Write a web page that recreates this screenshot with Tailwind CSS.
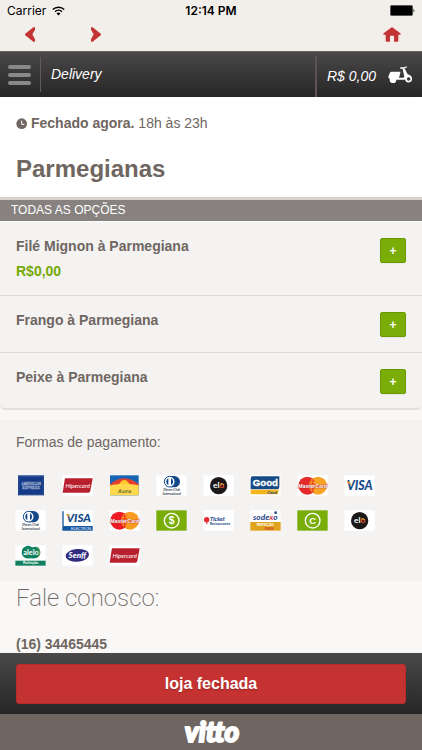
<!DOCTYPE html>
<html lang="pt-BR">
<head>
<meta charset="utf-8">
<meta name="viewport" content="width=device-width, initial-scale=1">
<title>Delivery</title>
<script src="https://cdn.jsdelivr.net/npm/@tailwindcss/browser@4"></script>
</head>
<body class="flex h-screen flex-col overflow-hidden bg-[#f9f8f6] font-['Liberation_Sans',Arial,sans-serif] text-[14px] text-[#6f6661]">

<div class="shrink-0 bg-[#f2eeea]">
  <div class="grid h-[21px] grid-cols-3 items-center px-[7px] font-[Inter,sans-serif] text-[12px] text-black">
    <div class="flex items-center gap-[6px]"><span>Carrier</span>
      <svg class="h-[10px] w-[13px]" viewBox="0 0 26 20" fill="none" stroke="#000" stroke-width="3" aria-label="Wi-Fi"><path d="M1.500 7a16.500 16.500 0 0 1 23 0"/><path d="M6 11.500a10 10 0 0 1 14 0"/><path d="M13 19l-4-4a5.700 5.700 0 0 1 8 0z" fill="#000" stroke="none"/></svg>
    </div>
    <time class="text-center font-semibold">12:14 PM</time>
    <svg class="h-[11px] w-[25px] justify-self-end" viewBox="0 0 25 11" aria-label="Bateria"><rect x=".5" y=".5" width="22" height="10" rx="1" fill="#000" stroke="#555"/><path d="M23.500 3.500q1.500 2 0 4z"/></svg>
  </div>
  <nav class="flex h-[30px] items-start pr-[21px] pl-[20px] pt-[6px]">
    <button aria-label="Voltar" class="flex w-5 justify-center"><svg class="h-[15px] w-[10px]" viewBox="0 0 30 45" fill="#c33333"><path d="M30 1v7L22 22l8 15v7h-5L0 24v-3L25 1z"/></svg></button>
    <button aria-label="Avançar" class="ml-[46px] flex w-5 justify-center"><svg class="h-[15px] w-[10px]" viewBox="0 0 30 45" fill="#c33333"><path d="M0 1v7l8 14-8 15v7h5l25-20v-3L5 1z"/></svg></button>
    <a href="#" aria-label="Início" class="ml-auto"><svg class="h-[15px] w-[18px]" viewBox="0 0 54 45" fill="#c33333"><path d="M23 3q4-4 8 0l21 16q3 4-2 4h-4v18q0 3-3 3H33V28q0-2-2-2h-8q-2 0-2 2v16H11q-3 0-3-3V23H4q-5 0-2-4z"/></svg></a>
  </nav>
</div>

<header class="flex h-[46px] shrink-0 items-stretch border-t border-[#6f6661] bg-linear-to-b from-[#4a4848] to-[#272626] text-white italic">
  <button aria-label="Menu" class="my-[5px] flex w-[41px] flex-col justify-center gap-1 border-r border-[#635a55] pr-[9px] pl-2">
    <span class="h-1 w-full rounded-xs bg-[#8b8987]"></span><span class="h-1 w-full rounded-xs bg-[#8b8987]"></span><span class="h-1 w-full rounded-xs bg-[#8b8987]"></span>
  </button>
  <h1 class="pt-3 pl-[10px] leading-5">Delivery</h1>
  <a href="#" class="mt-1 ml-auto flex items-center gap-3 border-l-2 border-[#5b5451] pr-[10px] pl-[10px]">
    <span>R$ 0,00</span>
    <svg class="mb-1 h-[17px] w-[24px]" viewBox="0 0 72 51" aria-label="Pedido"><path d="M10 17h25q3 0 2 4l-4 14h13l3-3-5-22h7l8 15q9 1 12 9l-7-1q-10-2-12 8H25a10 10 0 0 1-20 0l-1-4q-4-1-3-5l4-10q1-5 5-5z" fill="#fff"/><path d="M38 6h10l7-3M46 6l5 13" fill="none" stroke="#fff" stroke-width="4" stroke-linecap="round"/><circle cx="62" cy="39" r="8" fill="#383737" stroke="#fff" stroke-width="5"/></svg>
  </a>
</header>

<main class="min-h-0 flex-1 overflow-hidden">
  <section class="bg-white px-4 pt-[17px] pb-[14px]">
    <p class="flex items-center gap-[3px] leading-[18px]">
      <svg class="h-[11px] w-[12px]" viewBox="0 0 36 33" aria-hidden="true"><circle cx="17" cy="17" r="16" fill="#6f6661"/><path d="M17 8v11h8" fill="none" stroke="#fff" stroke-width="3"/></svg>
      <span><strong>Fechado agora.</strong> 18h às 23h</span>
    </p>
    <h2 class="mt-[22px] text-[24px] leading-[29px] font-bold">Parmegianas</h2>
  </section>

  <section class="rounded-b-[5px] border-b-2 border-[#e6e1de] bg-[#f4f3f2]">
    <h3 class="border-t-3 border-b border-t-[#d8d2ce] border-b-white bg-[#878280] pl-[11px] text-[12px] leading-[21px] text-white">TODAS AS OPÇÕES</h3>
    <ul>
      <li class="flex items-start justify-between border-b border-[#e0dad7] px-4 pt-4 pb-[15px]">
        <div class="font-bold"><h4 class="leading-4">Filé Mignon à Parmegiana</h4><p class="mt-2 leading-[18px] text-[#76a908]">R$0,00</p></div>
        <button aria-label="Adicionar Filé Mignon à Parmegiana" class="h-[25px] w-[26px] rounded-xs border border-[#699900] bg-[#7aad07] text-[12px] leading-none font-bold text-white shadow-xs">+</button>
      </li>
      <li class="flex items-start justify-between border-b border-[#e0dad7] px-4 pt-4 pb-[15px]">
        <h4 class="leading-4 font-bold">Frango à Parmegiana</h4>
        <button aria-label="Adicionar Frango à Parmegiana" class="h-[25px] w-[26px] rounded-xs border border-[#699900] bg-[#7aad07] text-[12px] leading-none font-bold text-white shadow-xs">+</button>
      </li>
      <li class="flex items-start justify-between px-4 pt-4 pb-[14px]">
        <h4 class="leading-4 font-bold">Peixe à Parmegiana</h4>
        <button aria-label="Adicionar Peixe à Parmegiana" class="h-[25px] w-[26px] rounded-xs border border-[#699900] bg-[#7aad07] text-[12px] leading-none font-bold text-white shadow-xs">+</button>
      </li>
    </ul>
  </section>

  <section class="mt-[10px] bg-[#f4f3f2] pt-[13px] pb-[15px]">
    <h3 class="px-4 leading-[18px]">Formas de pagamento:</h3>
    <ul class="mt-6 flex flex-wrap gap-x-4 gap-y-[14px] px-[15px]">
      <!-- American Express -->
      <li><svg class="h-[21px] w-[31px]" viewBox="0 0 93 63"><rect x="9" y="1" width="78" height="60" fill="#143a87"/><rect x="12" y="5" width="72" height="53" fill="none" stroke="#5e79ad"/><g font-family="Liberation Sans" font-weight="700" font-size="11" text-anchor="middle" fill="#143a87" stroke="#a9b9d6" stroke-width="1"><text x="48" y="29">AMERICAN</text><text x="48" y="42">EXPRESS</text></g></svg></li>
      <!-- Hipercard -->
      <li><svg class="h-[21px] w-[31px]" viewBox="0 0 93 63"><rect x="1" y="1" width="91" height="61" fill="#fff"/><path d="M9 10h83l-7 38q-1 5-6 5H2l6-39q0-4 4-4z" fill="#b9202e"/><text x="47" y="38" font-family="Lato" font-style="italic" font-weight="400" font-size="18" text-anchor="middle" fill="#fff">Hipercard</text></svg></li>
      <!-- Aura -->
      <li><svg class="h-[21px] w-[31px]" viewBox="0 0 93 63"><path fill="#1765b2" d="M3 1h86v60H3z"/><path d="M3 28Q46-8 89 28v8H3z" fill="#e6402d"/><path d="M28 31q18-32 36 0z" fill="#ffc629"/><path d="M3 31Q46 22 89 31v30H3z" fill="#ffd84c"/><text x="47" y="53" font-family="DejaVu Sans" font-style="italic" font-weight="700" font-size="15" text-anchor="middle" fill="#75733c">Aura</text></svg></li>
      <!-- Diners Club -->
      <li><svg class="h-[21px] w-[31px]" viewBox="0 0 93 63"><path fill="#fff" d="M1 1h91v61H1z"/><path d="M43 3h12a16 16 0 0 1 0 34H43z" fill="#134889"/><circle cx="41" cy="20" r="16" fill="#fff" stroke="#134889" stroke-width="3"/><path d="M37 10a11 11 0 0 0 0 20zm8 0a11 11 0 0 1 0 20z" fill="#134889"/><g font-family="Liberation Serif" font-style="italic" font-weight="700" font-size="10" text-anchor="middle" fill="#39434f"><text x="47" y="48">Diners Club</text><text x="47" y="60">International</text></g></svg></li>
      <!-- Elo -->
      <li><svg class="h-[21px] w-[31px]" viewBox="0 0 93 63"><path fill="#fff" d="M1 1h91v61H1z"/><circle cx="47" cy="32" r="26" fill="#1b1817"/><text x="47" y="38" text-anchor="middle" font-family="Lato" font-weight="700" font-size="25" fill="#fff">el<tspan fill="#ef5a31">o</tspan></text><path d="M52 27q7-4 10 3" stroke="#ffd23c" stroke-width="3" fill="none"/></svg></li>
      <!-- Good Card -->
      <li><svg class="h-[21px] w-[31px]" viewBox="0 0 93 63"><path fill="#fff" d="M1 1h91v61H1z"/><path d="M8 4h80v32q0 7-7 7H2V11q0-7 6-7z" fill="#164a87"/><path d="M2 44h85l-4 14H2z" fill="#f5b51d"/><text x="46" y="34" font-family="Liberation Sans" font-weight="700" font-size="29" text-anchor="middle" fill="#fff" stroke="#fff">Good</text><text x="81" y="56" font-family="Liberation Sans" font-weight="700" font-style="italic" font-size="13" text-anchor="end" fill="#184577">Card</text></svg></li>
      <!-- MasterCard -->
      <li><svg class="h-[21px] w-[31px]" viewBox="0 0 93 63"><path fill="#fff" d="M1 1h91v61H1z"/><circle cx="31" cy="32" r="27" fill="#e52a2c"/><circle cx="63" cy="32" r="27" fill="#f6a326"/><path d="M47 10v44M40 18h14m-14 8h14M40 42h14m-11 7h8" stroke="#e52a2c" stroke-width="2"/><text x="47" y="38" font-family="Liberation Sans" font-style="italic" font-weight="700" font-size="16" text-anchor="middle" fill="#fff" stroke="#bd2525" stroke-width="2" paint-order="stroke">MasterCard</text></svg></li>
      <!-- Visa -->
      <li><svg class="h-[21px] w-[31px]" viewBox="0 0 93 63"><path fill="#fff" d="M1 1h91v61H1z"/><text x="47" y="46" font-family="Lato" font-style="italic" font-weight="900" font-size="37" text-anchor="middle" fill="#174989">VISA</text><path d="M5 20h13l4 13q-6-10-17-13z" fill="#f2a52b"/></svg></li>
      <!-- Diners Club -->
      <li><svg class="h-[21px] w-[31px]" viewBox="0 0 93 63"><path fill="#fff" d="M1 1h91v61H1z"/><path d="M43 3h12a16 16 0 0 1 0 34H43z" fill="#134889"/><circle cx="41" cy="20" r="16" fill="#fff" stroke="#134889" stroke-width="3"/><path d="M37 10a11 11 0 0 0 0 20zm8 0a11 11 0 0 1 0 20z" fill="#134889"/><g font-family="Liberation Serif" font-style="italic" font-weight="700" font-size="10" text-anchor="middle" fill="#39434f"><text x="47" y="48">Diners Club</text><text x="47" y="60">International</text></g></svg></li>
      <!-- Visa Electron -->
      <li><svg class="h-[21px] w-[31px]" viewBox="0 0 93 63"><path fill="#fff" d="M1 1h91v61H1z"/><path d="M1 4h4v44h87v14H1z" fill="#1556a0"/><text x="50" y="37" font-family="Lato" font-style="italic" font-weight="900" font-size="35" text-anchor="middle" fill="#164a8a">VISA</text><path d="M10 13h11l3 12q-5-9-14-12z" fill="#f2a52b"/><text x="87" y="59" font-family="Liberation Sans" font-size="11" text-anchor="end" fill="#fff">ELECTRON</text></svg></li>
      <!-- MasterCard -->
      <li><svg class="h-[21px] w-[31px]" viewBox="0 0 93 63"><path fill="#fff" d="M1 1h91v61H1z"/><circle cx="31" cy="32" r="27" fill="#ed1c24"/><circle cx="63" cy="32" r="27" fill="#f79c20"/><path d="M47 10v44M40 18h14m-14 8h14M40 42h14m-11 7h8" stroke="#ed1c24" stroke-width="2"/><text x="47" y="38" font-family="Liberation Sans" font-style="italic" font-weight="700" font-size="16" text-anchor="middle" fill="#fff" stroke="#bd2525" stroke-width="2" paint-order="stroke">MasterCard</text></svg></li>
      <!-- Dinheiro -->
      <li><svg class="h-[21px] w-[31px]" viewBox="0 0 93 63"><path fill="#79ad08" d="M1 1h91v61H1z"/><circle cx="47" cy="32" r="22" fill="none" stroke="#fff" stroke-width="4"/><text x="47" y="43" font-family="Liberation Sans" font-weight="700" font-size="31" text-anchor="middle" fill="#fff">$</text></svg></li>
      <!-- Ticket Restaurante -->
      <li><svg class="h-[21px] w-[31px]" viewBox="0 0 93 63"><path fill="#fff" d="M1 1h91v61H1z"/><circle cx="11" cy="29" r="8" fill="#e32934"/><path d="M10 36h3v7h-3z" fill="#e32934"/><text x="21" y="32" font-family="Lato" font-style="italic" font-weight="900" font-size="17" fill="#264a88">Ticket</text><text x="20" y="44" font-family="Lato" font-style="italic" font-weight="700" font-size="12" fill="#264a88">Restaurante</text></svg></li>
      <!-- Sodexo -->
      <li><svg class="h-[21px] w-[31px]" viewBox="0 0 93 63"><path fill="#fff" d="M1 1h91v61H1z"/><path fill="#e0a31e" d="M1 36h91v26H1z"/><text x="46" y="29" font-family="Lato" font-style="italic" font-weight="700" font-size="25" text-anchor="middle" fill="#244687">sode<tspan fill="#df3345">x</tspan>o</text><circle cx="77" cy="8" r="4" fill="#244687"/><text x="46" y="48" font-family="Liberation Sans" font-weight="700" font-size="10" text-anchor="middle" fill="#fff">REFEIÇÃO</text><text x="57" y="60" font-family="Liberation Sans" font-weight="700" font-size="10" text-anchor="middle" fill="#cf3a25">PASS</text></svg></li>
      <!-- Cheque -->
      <li><svg class="h-[21px] w-[31px]" viewBox="0 0 93 63"><path fill="#79ad08" d="M1 1h91v61H1z"/><circle cx="47" cy="32" r="22" fill="none" stroke="#fff" stroke-width="4"/><text x="47" y="42" font-family="Liberation Sans" font-weight="700" font-size="28" text-anchor="middle" fill="#fff">C</text></svg></li>
      <!-- Elo -->
      <li><svg class="h-[21px] w-[31px]" viewBox="0 0 93 63"><path fill="#fff" d="M1 1h91v61H1z"/><circle cx="47" cy="32" r="26" fill="#1b1817"/><text x="47" y="38" text-anchor="middle" font-family="Lato" font-weight="700" font-size="25" fill="#fff">el<tspan fill="#ef5a31">o</tspan></text><path d="M52 27q7-4 10 3" stroke="#ffd23c" stroke-width="3" fill="none"/></svg></li>
      <!-- Alelo -->
      <li><svg class="h-[21px] w-[31px]" viewBox="0 0 93 63"><path fill="#fff" d="M1 1h91v61H1z"/><path d="M35 3q10-3 16 4 24-8 25 15 0 21-27 18-28 3-29-17Q20 7 35 3z" fill="#128060"/><path d="M65 7q17 13 5 29" fill="none" stroke="#9fc95c" stroke-width="2"/><path d="M1 47h91v15H1z" fill="#128060"/><text x="48" y="31" font-family="Lato" font-weight="700" font-size="22" text-anchor="middle" fill="#fff">alelo</text><text x="47" y="58" font-family="Liberation Sans" font-weight="700" font-size="11" text-anchor="middle" fill="#fff">Refeição</text></svg></li>
      <!-- Senff -->
      <li><svg class="h-[21px] w-[31px]" viewBox="0 0 93 63"><path fill="#fff" d="M1 1h91v61H1z"/><ellipse cx="46" cy="31" rx="35" ry="19" fill="#302c80" transform="rotate(-4 46 31)"/><text x="46" y="39" font-family="Lato" font-style="italic" font-weight="900" font-size="24" text-anchor="middle" fill="#fff">Senff</text></svg></li>
      <!-- Hipercard -->
      <li><svg class="h-[21px] w-[31px]" viewBox="0 0 93 63"><rect x="1" y="1" width="91" height="61" fill="#fff"/><path d="M9 10h83l-7 38q-1 5-6 5H2l6-39q0-4 4-4z" fill="#b9202e"/><text x="47" y="38" font-family="Lato" font-style="italic" font-weight="400" font-size="18" text-anchor="middle" fill="#fff">Hipercard</text></svg></li>
    </ul>
  </section>

  <section class="px-4">
    <h3 class="pt-[1px] font-[Roboto,sans-serif] text-[24px] leading-8 font-extralight">Fale conosco:</h3>
    <p class="mt-[21px] leading-[18px] font-bold">(16) 34465445</p>
  </section>
</main>

<footer class="shrink-0">
  <div class="bg-linear-to-b from-[#4a4949] to-[#272727] px-4 pt-[11px] pb-[10px]">
    <button class="h-[40px] w-full rounded-[3px] border border-[#b62c2c] bg-[#c43331] text-[16px] font-bold text-white text-shadow-sm">loja fechada</button>
  </div>
  <div class="flex h-9 justify-center bg-[#6f6661]">
    <svg class="h-9 w-[80px]" viewBox="0 0 80 36" role="img" aria-label="vitto"><text x="41" y="28" font-family="Lato" font-style="italic" font-weight="900" font-size="28" text-anchor="middle" fill="#fff" stroke="#fff" stroke-width="2" stroke-linejoin="round">vitto</text></svg>
  </div>
</footer>
</body>
</html>
